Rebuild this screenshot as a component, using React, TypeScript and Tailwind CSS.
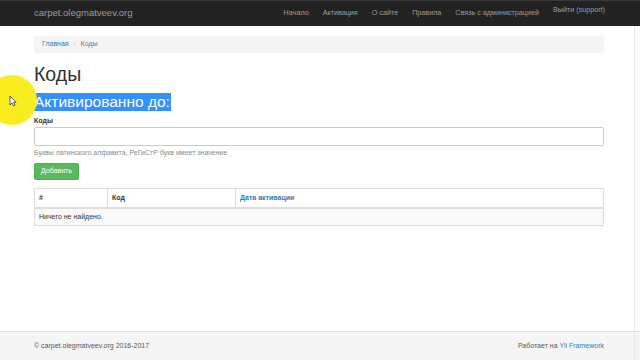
import React from 'react';

const navItems = ['Начало', 'Активация', 'О сайте', 'Правила', 'Связь с администрацией'];

// Cursor highlight overlay from the screen recording
const CursorSpot: React.FC = () => (
  <div className="pointer-events-none absolute left-[-13px] top-[75px] h-[50px] w-[50px] rounded-full bg-[#f9ec1f]">
    <svg className="absolute left-[22px] top-[20px]" width="8" height="12" viewBox="0 0 8 12">
      <path d="M1 1 L1 10 L3 8 L4.5 11 L6 10.3 L4.6 7.4 L7 7.4 Z" fill="#fff" stroke="#333" strokeWidth="0.8" strokeLinejoin="round" />
    </svg>
  </div>
);

function App() {
  return (
    <div className="relative flex h-[360px] w-[640px] flex-col overflow-hidden bg-white font-['Liberation_Sans',Arial,sans-serif] text-[7px] text-[#333]">
      {/* Navbar */}
      <header className="flex h-[26px] shrink-0 items-center border-t border-[#3a3a3a] bg-[#222] pl-[34px] pr-[35px]">
        <span className="text-[9.5px] text-[#9d9d9d]">carpet.olegmatveev.org</span>
        <nav className="ml-auto flex items-center gap-[14px] text-[7.2px] text-[#9d9d9d]">
          {navItems.map((item) => (
            <span key={item}>{item}</span>
          ))}
          <span className="-mt-[7px]">Выйти (support)</span>
        </nav>
      </header>

      <main className="flex flex-1 flex-col px-[34px] pr-[36px]">
        {/* Breadcrumb */}
        <div className="mt-[10px] flex h-[17px] items-center gap-[5px] rounded-[2px] bg-[#f5f5f5] px-[8px]">
          <span className="text-[#337ab7]">Главная</span>
          <span className="text-[#ccc]">/</span>
          <span className="text-[#777]">Коды</span>
        </div>

        <h1 className="mt-[10px] text-[19.5px] leading-[22px] text-[#333]">Коды</h1>

        <div className="mt-[8px] flex">
          <h2 className="bg-[#3390ff] pr-[1px] text-[15.5px] leading-[18px] text-white">Активированно до:</h2>
        </div>

        <label className="mt-[5px] font-bold text-[#333]">Коды</label>
        <div className="mt-[0px] h-[19px] rounded-[2px] border border-[#ccc] bg-white" />
        <p className="mt-[2px] text-[#8a8a8a]">Буквы латинского алфавита, РеГиСтР букв имеет значение</p>

        <div className="mt-[5px] flex">
          <button className="h-[17px] rounded-[2px] border border-[#4cae4c] bg-[#5cb85c] px-[6px] text-[7px] text-white">
            Добавить
          </button>
        </div>

        {/* Grid */}
        <table className="mt-[8px] w-full border-collapse border border-[#ddd]">
          <thead>
            <tr className="h-[19px] border-b-2 border-[#ddd] text-left font-bold">
              <th className="w-[73px] border-r border-[#ddd] px-[4px] font-bold">#</th>
              <th className="w-[128px] border-r border-[#ddd] px-[4px] font-bold">Код</th>
              <th className="px-[4px] font-bold text-[#337ab7]">Дата активации</th>
            </tr>
          </thead>
          <tbody>
            <tr className="h-[18px] bg-[#f9f9f9]">
              <td colSpan={3} className="px-[4px] text-[#333]">Ничего не найдено.</td>
            </tr>
          </tbody>
        </table>
      </main>

      {/* Footer */}
      <footer className="flex h-[29px] shrink-0 items-center justify-between border-t border-[#ddd] bg-[#f5f5f5] pl-[34px] pr-[36px] text-[#555]">
        <span>© carpet.olegmatveev.org 2016-2017</span>
        <span>
          Работает на <span className="text-[#337ab7]">Yii Framework</span>
        </span>
      </footer>

      <div className="absolute right-[5px] top-[26px] bottom-0 w-px bg-[#e6e6e6]" />
      <CursorSpot />
    </div>
  );
}

export default App;
